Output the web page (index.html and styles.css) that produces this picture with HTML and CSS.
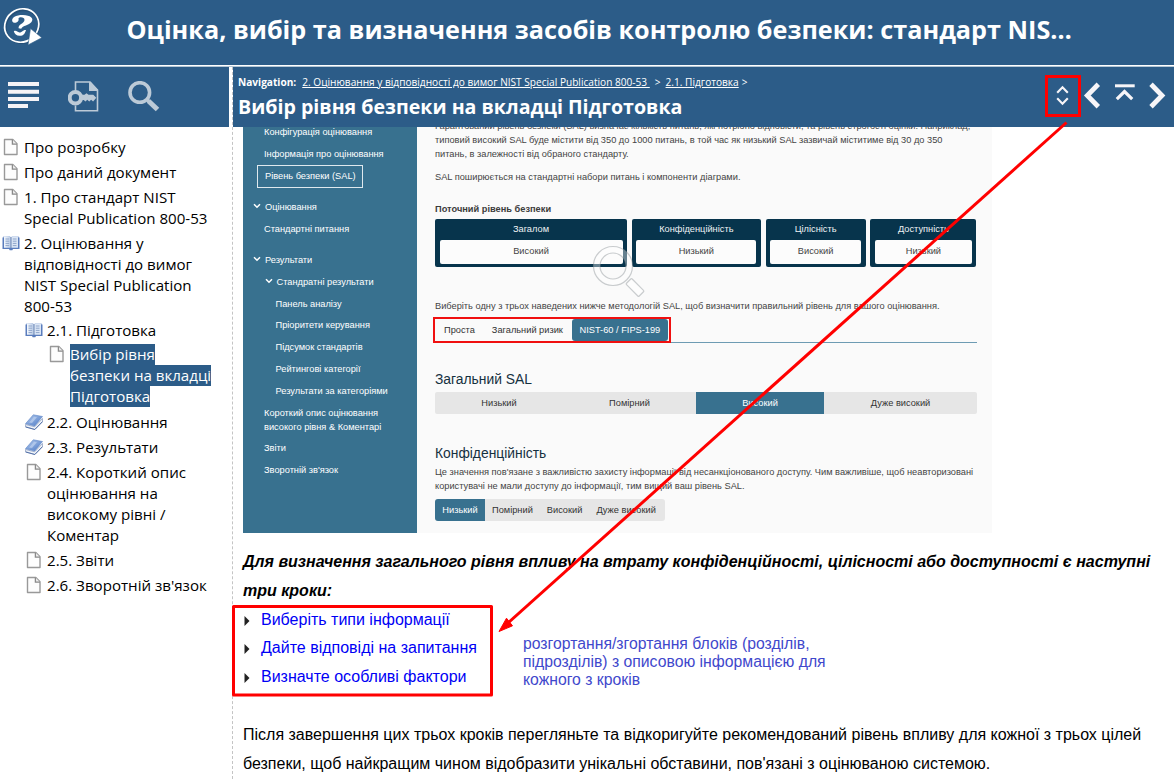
FILE: index.html
```
<!DOCTYPE html>
<html lang="uk">
<head>
<meta charset="utf-8">
<title>Вибір рівня безпеки на вкладці Підготовка</title>
<link rel="stylesheet" href="styles.css">
</head>
<body>
<svg class="defs" width="0" height="0">
  <defs>
    <linearGradient id="cover" x1="0" y1="0" x2="1" y2="1"><stop offset="0" stop-color="#b4cbee"/><stop offset="1" stop-color="#4a78c4"/></linearGradient>
    <linearGradient id="leaf" x1="0" y1="0" x2="1" y2="0"><stop offset="0" stop-color="#f4f8fd"/><stop offset="1" stop-color="#b9cbe6"/></linearGradient>
  </defs>
  <symbol id="page" viewBox="0 0 16 18">
    <path d="M1.500 1.500h8.300l4.200 4.300v10.700H1.500z" fill="#fdfdfd" stroke="#999" stroke-width="1.4" stroke-linejoin="round"/>
    <path d="M9.400 1.500v4.700H14" fill="#eee" stroke="#8a8a8a" stroke-width="1.3"/>
  </symbol>
  <symbol id="open" viewBox="0 0 18 16">
    <path d="M.5 2.500h1v-1h6l1.500.8 1.500-.8h6v1h1v11.500h-6.500l-.7 1.200H7.700L7 14H.5z" fill="#5a7dbd"/>
    <path d="M2 1.200h5.300L8.800 2v10.800H2z" fill="url(#leaf)"/>
    <path d="M16 1.200h-5.300L9.200 2v10.800H16z" fill="#dbe6f5"/>
    <path d="M3.500 4h3.700M3.500 6.200h3.700M3.500 8.400h3.700M3.500 10.600h3.700M10.800 4h3.700M10.800 6.200h3.700M10.800 8.400h3.700M10.800 10.600h3.700" stroke="#8fa5cb" stroke-width="1"/>
    <path d="M9 2v11" stroke="#6d84ad" stroke-width=".7"/>
  </symbol>
  <symbol id="closed" viewBox="0 0 18 16">
    <path d="M.5 10.500v2.200l9.300 2.800 7.700-7.700V4.500L9.700 12.800z" fill="#f1f4f9" stroke="#7288b0" stroke-width=".6"/>
    <path d="M.5 9.700L8.300.8l9.200 1.700-7.800 9.500z" fill="url(#cover)" stroke="#5d84c6" stroke-width=".6"/>
    <path d="M.6 13l9.200 2.500 7.700-7.900" fill="none" stroke="#4868a4" stroke-width=".9"/>
    <path d="M4 8.400L9 2.800l3 .5-5 5.800z" fill="#c9daf4" fill-opacity=".6"/>
  </symbol>
</svg>

<header class="banner">
  <svg class="logo" viewBox="0 0 44 48">
    <g fill="none" stroke="#1f4569" stroke-width="2.200" transform="translate(.8 1)" opacity=".5"><ellipse cx="21.700" cy="25.500" rx="17.200" ry="16" transform="rotate(-38 21.700 25.500)"/></g>
    <ellipse cx="21.700" cy="25.500" rx="17.600" ry="16.200" transform="rotate(-38 21.700 25.500)" fill="none" stroke="#fff" stroke-width="1.700"/>
    <path d="M12.500 21.800C10.500 17.200 17 14.800 23 15c7.500.2 11.200 3.200 8.500 7-2.400 3.300-9 3.600-10.300 6.700l-2.600-.4c-.6-4.200 5.600-4.500 5.900-8.300.1-2.200-2.400-3-5-2.500-1.700.4-.5 1.600-1 2.900-.8 2-4.900 3.300-6 1.400z" fill="#fff"/>
    <path d="M13.800 31.200c2.700-1.300 3.400 1.300 5.800 1.200 2.600-.1 3.100-2.700 6.400-2.500-.9 3.500-2.900 6-6.300 5.900-3.200-.1-5.300-2.200-5.900-4.600z" fill="#fff"/>
    <path d="M30.500 28.500l11.300 9.200L28 45z" fill="#fff" stroke="#2c5c88" stroke-width=".6"/>
  </svg>
  <h1>Оцінка, вибір та визначення засобів контролю безпеки: стандарт NIS…</h1>
</header>

<div class="frame">
  <aside class="side">
    <div class="tools">
      <svg width="31" height="28" viewBox="0 0 31 28" fill="#f5f3f6"><path d="M0 1h31v4H0zM0 8.700h31v4H0zM0 16h31v4H0zM0 23h20v4H0z"/></svg>
      <svg width="32" height="32" viewBox="0 0 32 32" fill="none" stroke="#bccad7">
        <path d="M7.500 10V1h14.300l7.700 8v20.700h-22v-5.200" stroke-width="1.600"/>
        <path d="M21 .5V10h9z" fill="#bccad7" stroke="none"/>
        <path d="M22 1l7.500 8.500" stroke-width="1.500"/>
        <circle cx="7.400" cy="16.700" r="5.700" stroke-width="4"/>
        <path d="M13 13.800h3.500l2-1.500 2 1.500h4.800l3 3-3.200 3.700-2-1.700-1.800 1.700-2.100-1.700-1.600 1.600-1.900-1.300H13z" fill="#bccad7" stroke="none"/>
      </svg>
      <svg width="32" height="32" viewBox="0 0 32 32" fill="none" stroke="#bccad7"><circle cx="11.800" cy="11.500" r="9.800" stroke-width="3.600"/><path d="M18.500 18l2.500 2.500" stroke-width="3.500"/><path d="M20.500 20l9 8.500" stroke-width="5"/></svg>
    </div>
    <nav class="tree">
      <div class="node"><svg class="ic doc"><use href="#page"/></svg><span>Про розробку</span></div>
      <div class="node"><svg class="ic doc"><use href="#page"/></svg><span>Про даний документ</span></div>
      <div class="node"><svg class="ic doc"><use href="#page"/></svg><span>1. Про стандарт NIST<br>Special Publication 800-53</span></div>
      <div class="node parent"><svg class="ic book"><use href="#open"/></svg><span>2. Оцінювання у<br>відповідності до вимог<br>NIST Special Publication<br>800-53</span></div>
      <div class="branch">
        <div class="node parent"><svg class="ic book"><use href="#open"/></svg><span>2.1. Підготовка</span></div>
        <div class="branch deep">
          <div class="node"><svg class="ic doc"><use href="#page"/></svg><span class="selected"><mark>Вибір рівня</mark><mark>безпеки на вкладці</mark><mark>Підготовка</mark></span></div>
        </div>
        <div class="node"><svg class="ic book"><use href="#closed"/></svg><span>2.2. Оцінювання</span></div>
        <div class="node"><svg class="ic book"><use href="#closed"/></svg><span>2.3. Результати</span></div>
        <div class="node"><svg class="ic doc"><use href="#page"/></svg><span>2.4. Короткий опис<br>оцінювання на<br>високому рівні /<br>Коментар</span></div>
        <div class="node"><svg class="ic doc"><use href="#page"/></svg><span>2.5. Звіти</span></div>
        <div class="node"><svg class="ic doc"><use href="#page"/></svg><span>2.6. Зворотній зв'язок</span></div>
      </div>
    </nav>
  </aside>

  <main class="topic">
    <div class="topic-head">
      <div class="titles">
        <div class="crumbs"><b>Navigation:</b><a class="c1">2. Оцінювання у відповідності до вимог NIST Special Publication 800-53&nbsp;</a><i>&gt;</i><a>2.1. Підготовка</a><i class="last">&gt;</i></div>
        <h2>Вибір рівня безпеки на вкладці Підготовка</h2>
      </div>
      <svg class="pager" width="112" height="32" viewBox="0 0 112 32" fill="none" stroke="#f7f5f8">
        <path d="M3.200 13.800l5.300-5.600 5.300 5.600M3.200 19.200l5.300 5.600 5.300-5.600" stroke-width="2.100"/>
        <path d="M44.300 5.300L33.300 16.500l11 11.200" stroke-width="4.800"/>
        <path d="M61 6.800h19.700" stroke-width="3"/>
        <path d="M62.800 20.200l7.700-7.700 7.700 7.700" stroke-width="3.200"/>
        <path d="M97 5.300l11 11.200-11 11.200" stroke-width="4.800"/>
      </svg>
    </div>

    <div class="content">
      <div class="shot">
        <div class="menu">
          <div>Конфігурація оцінювання</div>
          <div>Інформація про оцінювання</div>
          <div class="current">Рівень безпеки (SAL)</div>
          <div class="group"><svg viewBox="0 0 8 6"><path d="M1 1.200l3 3 3-3"/></svg>Оцінювання</div>
          <div>Стандартні питання</div>
          <div class="group"><svg viewBox="0 0 8 6"><path d="M1 1.200l3 3 3-3"/></svg>Результати</div>
          <div class="sub"><svg viewBox="0 0 8 6"><path d="M1 1.200l3 3 3-3"/></svg>Стандратні результати</div>
          <div class="leaf">Панель аналізу</div>
          <div class="leaf">Пріоритети керування</div>
          <div class="leaf">Підсумок стандартів</div>
          <div class="leaf">Рейтингові категорії</div>
          <div class="leaf">Результати за категоріями</div>
          <div class="two">Короткий опис оцінювання<br>високого рівня &amp; Коментарі</div>
          <div>Звіти</div>
          <div>Зворотній зв'язок</div>
        </div>
        <div class="sal">
          <p class="intro">Гарантований рівень безпеки (SAL) визначає кількість питань, які потрібно відповісти, та рівень строгості оцінки. Наприклад,<br>типовий високий SAL буде містити від 350 до 1000 питань, в той час як низький SAL зазвичай міститиме від 30 до 350<br>питань, в залежності від обраного стандарту.</p>
          <p>SAL поширюється на стандартні набори питань і компоненти діаграми.</p>
          <p class="now">Поточний рівень безпеки</p>
          <div class="levels">
            <div>Загалом<span>Високий</span></div>
            <div>Конфіденційність<span>Низький</span></div>
            <div>Цілісність<span>Високий</span></div>
            <div>Доступність<span>Низький</span></div>
            <svg class="lens" width="54" height="54" viewBox="0 0 54 54" stroke="#8c9296" stroke-opacity=".45" stroke-width="1.200">
              <path fill="#fff" fill-opacity=".38" fill-rule="evenodd" d="M21 1.500a19.500 19.500 0 1 0 0 39 19.500 19.500 0 0 0 0-39zM21 8a13 13 0 1 1 0 26 13 13 0 0 1 0-26z"/>
              <rect x="34" y="38.500" width="18" height="8" rx="1" transform="rotate(45 43 42.500)" fill="#fff" fill-opacity=".5"/>
            </svg>
          </div>
          <p class="choose">Виберіть одну з трьох наведених нижче методологій SAL, щоб визначити правильний рівень для вашого оцінювання.</p>
          <div class="tabs"><div class="tabset"><span>Проста</span><span>Загальний ризик</span><span class="on">NIST-60 / FIPS-199</span></div></div>
          <h3>Загальний SAL</h3>
          <div class="bar"><span>Низький</span><span>Помірний</span><span class="on">Високий</span><span>Дуже високий</span></div>
          <h3 class="conf">Конфіденційність</h3>
          <p class="about">Це значення пов'язане з важливістю захисту інформації від несанкціонованого доступу. Чим важливіше, щоб неавторизовані<br>користувачі не мали доступу до інформації, тим вищий ваш рівень SAL.</p>
          <div class="pick"><span class="on">Низький</span><span>Помірний</span><span>Високий</span><span>Дуже високий</span></div>
        </div>
      </div>
      <p class="lead">Для визначення загального рівня впливу на втрату конфіденційності, цілісності або доступності є наступні<br>три кроки:</p>
      <ul class="steps">
        <li><svg viewBox="0 0 6 10"><path d="M.5 0v10L5.500 5z"/></svg><a>Виберіть типи інформації</a></li>
        <li><svg viewBox="0 0 6 10"><path d="M.5 0v10L5.500 5z"/></svg><a>Дайте відповіді на запитання</a></li>
        <li><svg viewBox="0 0 6 10"><path d="M.5 0v10L5.500 5z"/></svg><a>Визначте особливі фактори</a></li>
      </ul>
      <p class="after">Після завершення цих трьох кроків перегляньте та відкоригуйте рекомендований рівень впливу для кожної з трьох цілей<br>безпеки, щоб найкращим чином відобразити унікальні обставини, пов'язані з оцінюваною системою.</p>
    </div>
  </main>
</div>

<div class="note">розгортання/згортання блоків (розділів,<br>підрозділів) з описовою інформацією для<br>кожного з кроків</div>
<svg class="marks" width="1174" height="779" viewBox="0 0 1174 779" fill="none" stroke="#f00">
  <rect x="1046.500" y="76.500" width="33" height="39" stroke-width="3"/>
  <rect x="233.500" y="606.500" width="258" height="88.500" stroke-width="3" stroke-linejoin="round"/>
  <path d="M1066.500 122.500L508 623" stroke-width="3"/>
  <path d="M499 631.500l7.500-13.300 6 7.600z" fill="#f00" stroke-width="1"/>
</svg>
</body>
</html>
```
FILE: styles.css
```
* { box-sizing: border-box; }
body {
  margin: 0;
  width: 1174px;
  height: 779px;
  overflow: hidden;
  position: relative;
  background: #fff;
  color: #000;
  font-family: "Open Sans", "Noto Sans", sans-serif;
}
h1, h2, h3, p, ul { margin: 0; padding: 0; }
.defs { position: absolute; }

.banner {
  display: flex;
  height: 67px;
  background: #2c5c88;
  border-bottom: 1px solid #b4c6d6;
  box-shadow: inset 0 -1px #fff;
}
.logo { width: 44px; height: 48px; flex: none; }
.banner h1 {
  margin-left: 82.500px;
  font-size: 25.220px;
  line-height: 58px;
  color: #fff;
  white-space: nowrap;
}

.frame { display: flex; height: 712px; }
.side { width: 232px; flex: none; }
.tools {
  display: flex;
  gap: 29px;
  width: 229px;
  height: 60px;
  padding: 14px 0 0 7.500px;
  background: #2c5c88;
}
.tools svg:nth-child(3) { margin-left: -1px; }

.tree { padding-top: 8px; font-size: 15.100px; line-height: 21px; white-space: nowrap; }
.node { display: flex; padding: 2px 0; }
.parent { padding-bottom: 1px; }
.node span { display: block; }
.ic { flex: none; }
.doc { width: 16px; height: 18px; margin: 1px 5px 0 3px; }
.book { width: 18px; height: 16px; margin: 2px 4px 0 2px; }
.branch { padding-left: 23px; }
.branch.deep { padding-bottom: 1px; }
.node .selected { display: flex; flex-direction: column; align-items: flex-start; }
mark { height: 21px; background: #2c5c88; color: #fff; }

.topic { flex: 1; min-width: 0; display: flex; flex-direction: column; border-left: 1px dashed #c4c4c4; }
.topic-head {
  display: flex;
  justify-content: space-between;
  height: 60px;
  flex: none;
  padding: 6px 8px 0 5px;
  background: #2c5c88;
  color: #fff;
}
.crumbs { display: flex; font-size: 10.120px; line-height: 19px; white-space: pre; }
.crumbs a { text-decoration: underline; text-underline-offset: 1px; }
.crumbs .c1 { margin-left: 6px; }
.crumbs i { font-style: normal; margin: 0 5px 0 5px; }
.crumbs .last { margin-left: 3px; }
.topic-head h2 { font-size: 19.600px; line-height: 30px; white-space: nowrap; }
.pager { margin-top: 6px; }

.content { flex: 1; overflow: hidden; padding-left: 10px; font: 16px "Liberation Sans", Arial, sans-serif; white-space: nowrap; }

.shot { display: flex; width: 749px; height: 406px; overflow: hidden; background: #fafafa; font-size: 9.250px; line-height: 14px; color: #444; }
.menu { width: 174px; flex: none; margin-top: -5.300px; background: #38718f; color: #fff; line-height: 21.800px; }
.menu > div { height: 21.800px; padding-left: 21px; }
.menu > .current { width: 106px; height: 23px; margin: -.3px 0 9px 14px; padding-left: 7px; border: 1px solid #dfe9ee; line-height: 21px; }
.menu > .group { padding-left: 10px; }
.menu > .group:nth-child(6) { margin-top: 9.400px; }
.menu > .sub { padding-left: 22px; }
.menu > .leaf { padding-left: 32.500px; }
.menu > .two { height: 35.900px; padding-top: 3.300px; line-height: 14.300px; }
.menu svg { width: 8px; height: 6px; margin-right: 4px; vertical-align: 1px; fill: none; stroke: #fff; stroke-width: 1.500; }
.menu .sub svg { margin-right: 3.500px; }

.sal { width: 542px; margin: -8px 0 0 18px; }
.intro { margin-bottom: 9px; }
.now { margin: 18px 0 3px; font-weight: bold; color: #3c3c3c; }
.levels { position: relative; display: grid; grid-template-columns: 192px 129px 100px 106px; column-gap: 4.800px; height: 48px; }
.levels > div { padding: 0 4.500px; border-radius: 2px; background: #07344c; color: #eef2f4; text-align: center; line-height: 21px; }
.levels span { display: block; height: 23.500px; border-radius: 2px; background: #fcfcfc; color: #444; line-height: 23px; }
.lens { position: absolute; left: 157px; top: 26px; }
.choose { margin: 32px 0 4px; }
.tabs { display: flex; height: 26px; border-bottom: 1px solid #6d9bb3; }
.tabset { display: flex; width: 238px; height: 26px; margin-left: -2px; padding-left: 1px; border: 2px solid #f01010; line-height: 22px; color: #333; }
.tabset span { margin-left: 8px; margin-right: 9px; }
.tabset .on { width: 96px; height: 22px; margin: 0; border-radius: 3px; background: #38718f; color: #fff; text-align: center; }
.sal h3 { font-size: 13.850px; line-height: 18px; font-weight: normal; color: #15303f; margin: 27px 0 4px; }
.bar { display: grid; grid-template-columns: 128px 133px 128px 153px; height: 22px; border-radius: 2px; background: #e6e6e6; text-align: center; line-height: 22px; color: #333; }
.on { background: #38718f; color: #fff; }
.sal .conf { margin: 30px 0 3px; }
.about { margin-bottom: 6px; }
.pick { display: flex; width: 230px; height: 22px; border-radius: 3px; background: #e6e6e6; line-height: 22px; color: #333; overflow: hidden; }
.pick span { padding: 0 7px; }
.pick .on { width: 50px; padding: 0; text-align: center; }

.lead { margin-top: 14px; font-weight: bold; font-style: italic; line-height: 29px; }
.steps { list-style: none; margin-top: .8px; line-height: 28.700px; }
.steps li { display: flex; align-items: center; height: 28.700px; }
.steps svg { width: 6px; height: 10px; margin: 1px 11px 0 1px; fill: #222; }
.steps a { color: #0000f5; }
.after { margin-top: 27.700px; line-height: 29px; }

.note { position: absolute; left: 523px; top: 635px; font: 15.780px/18px "Liberation Sans", Arial, sans-serif; color: #3f48cc; white-space: nowrap; }
.marks { position: absolute; left: 0; top: 0; pointer-events: none; }
```
